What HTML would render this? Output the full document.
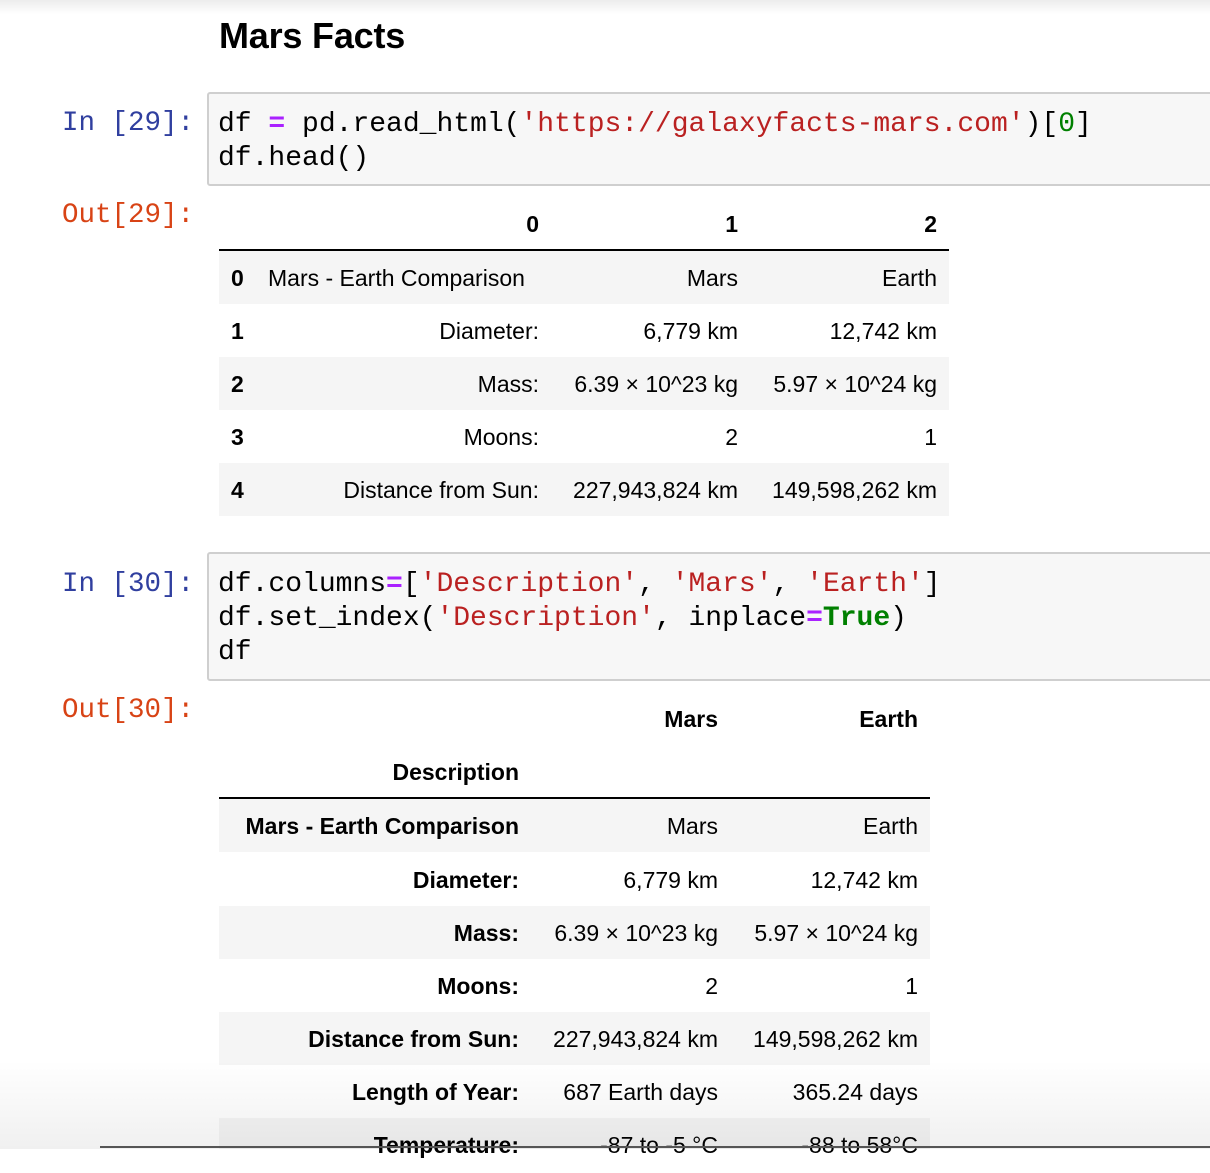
<!DOCTYPE html>
<html><head><style>
body{margin:0;width:1210px;height:1149px;overflow:hidden;background:#fff;position:relative;font-family:"Liberation Sans",Arial,sans-serif;}
.top{position:absolute;left:0;top:0;width:1210px;height:14px;background:linear-gradient(#ececec,#fff);}
h1{position:absolute;left:219px;top:15px;margin:0;font-size:36px;font-weight:bold;letter-spacing:-0.2px;}
.prompt{position:absolute;left:62px;font-family:"Liberation Mono",monospace;font-size:27.5px;}
.in{color:#303f9f}.out{color:#d84315}
.code{position:absolute;left:207px;width:1010px;background:#f7f7f7;border:2px solid #cfcfcf;border-radius:3px;box-sizing:border-box;font-family:"Liberation Mono",monospace;font-size:28px;line-height:34px;padding:14px 0 0 9px;white-space:pre;color:#000;}
.s{color:#ba2121}.o{color:#aa22ff;font-weight:bold}.n{color:#008000}.k{color:#008000;font-weight:bold}
.row{position:absolute;height:53px;font-size:23px;line-height:55px;}
.g{background:#f5f5f5}
.c{position:absolute;top:0;text-align:right;white-space:nowrap}
.b{font-weight:bold}
.shade{position:absolute;left:0;top:1060px;width:1210px;height:89px;background:linear-gradient(rgba(255,255,255,0),rgba(0,0,0,0.06));pointer-events:none}
.line{position:absolute;left:100px;top:1146px;width:1110px;height:2px;background:#555}
</style></head><body>
<div class="top"></div>
<h1>Mars Facts</h1>

<div class="prompt in" style="top:108px">In [29]:</div>
<div class="code" style="top:92px;height:94px">df <span class="o">=</span> pd.read_html(<span class="s">'https://galaxyfacts-mars.com'</span>)[<span class="n">0</span>]
df.head()</div>

<div class="prompt out" style="top:200px">Out[29]:</div>
<div class="row" style="left:219px;top:197px;width:730px;font-weight:bold">
 <div class="c" style="right:410px">0</div><div class="c" style="right:211px">1</div><div class="c" style="right:12px">2</div>
</div>
<div style="position:absolute;left:219px;top:249px;width:730px;height:2px;background:#000"></div>
<div class="row g" style="left:219px;top:251px;width:730px"><div class="c b" style="left:12px">0</div><div class="c" style="left:49px">Mars - Earth Comparison</div><div class="c" style="right:211px">Mars</div><div class="c" style="right:12px">Earth</div></div>
<div class="row" style="left:219px;top:304px;width:730px"><div class="c b" style="left:12px">1</div><div class="c" style="right:410px">Diameter:</div><div class="c" style="right:211px">6,779 km</div><div class="c" style="right:12px">12,742 km</div></div>
<div class="row g" style="left:219px;top:357px;width:730px"><div class="c b" style="left:12px">2</div><div class="c" style="right:410px">Mass:</div><div class="c" style="right:211px">6.39 × 10^23 kg</div><div class="c" style="right:12px">5.97 × 10^24 kg</div></div>
<div class="row" style="left:219px;top:410px;width:730px"><div class="c b" style="left:12px">3</div><div class="c" style="right:410px">Moons:</div><div class="c" style="right:211px">2</div><div class="c" style="right:12px">1</div></div>
<div class="row g" style="left:219px;top:463px;width:730px"><div class="c b" style="left:12px">4</div><div class="c" style="right:410px">Distance from Sun:</div><div class="c" style="right:211px">227,943,824 km</div><div class="c" style="right:12px">149,598,262 km</div></div>

<div class="prompt in" style="top:569px">In [30]:</div>
<div class="code" style="top:552px;height:129px">df.columns<span class="o">=</span>[<span class="s">'Description'</span>, <span class="s">'Mars'</span>, <span class="s">'Earth'</span>]
df.set_index(<span class="s">'Description'</span>, inplace<span class="o">=</span><span class="k">True</span>)
df</div>

<div class="prompt out" style="top:695px">Out[30]:</div>
<div class="row b" style="left:219px;top:692px;width:711px"><div class="c" style="right:212px">Mars</div><div class="c" style="right:12px">Earth</div></div>
<div class="row b" style="left:219px;top:745px;width:711px"><div class="c" style="right:411px">Description</div></div>
<div style="position:absolute;left:219px;top:797px;width:711px;height:2px;background:#000"></div>
<div class="row g" style="left:219px;top:799px;width:711px"><div class="c b" style="right:411px">Mars - Earth Comparison</div><div class="c" style="right:212px">Mars</div><div class="c" style="right:12px">Earth</div></div>
<div class="row" style="left:219px;top:853px;width:711px"><div class="c b" style="right:411px">Diameter:</div><div class="c" style="right:212px">6,779 km</div><div class="c" style="right:12px">12,742 km</div></div>
<div class="row g" style="left:219px;top:906px;width:711px"><div class="c b" style="right:411px">Mass:</div><div class="c" style="right:212px">6.39 × 10^23 kg</div><div class="c" style="right:12px">5.97 × 10^24 kg</div></div>
<div class="row" style="left:219px;top:959px;width:711px"><div class="c b" style="right:411px">Moons:</div><div class="c" style="right:212px">2</div><div class="c" style="right:12px">1</div></div>
<div class="row g" style="left:219px;top:1012px;width:711px"><div class="c b" style="right:411px">Distance from Sun:</div><div class="c" style="right:212px">227,943,824 km</div><div class="c" style="right:12px">149,598,262 km</div></div>
<div class="row" style="left:219px;top:1065px;width:711px"><div class="c b" style="right:411px">Length of Year:</div><div class="c" style="right:212px">687 Earth days</div><div class="c" style="right:12px">365.24 days</div></div>
<div class="row g" style="left:219px;top:1118px;width:711px;height:31px"><div class="c b" style="right:411px">Temperature:</div><div class="c" style="right:212px">-87 to -5 °C</div><div class="c" style="right:12px">-88 to 58°C</div></div>
<div class="shade"></div>
<div class="line"></div>
</body></html>
